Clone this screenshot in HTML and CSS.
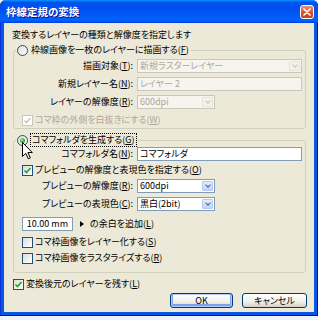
FILE: index.html
```html
<!DOCTYPE html>
<html lang="ja">
<head>
  <meta charset="UTF-8">
  <meta name="viewport" content="width=device-width, initial-scale=1.0">
  <title>枠線定規の変換</title>
  <link rel="stylesheet" href="styles.css">
</head>
<body>
  <div class="window">
    <div class="titlebar">
      <span class="title">枠線定規の変換</span>
      <span class="close-btn">
        <svg width="8" height="8" viewBox="0 0 8 8"><path d="M1 1 L7 7 M7 1 L1 7" stroke="#fff" stroke-width="1.7" stroke-linecap="round"/></svg>
      </span>
    </div>

    <div class="dialog">
      <p class="intro">変換するレイヤーの種類と解像度を指定します</p>

      <fieldset class="group group-first">
        <legend><span class="legend-row"><span class="radio"></span><span>枠線画像を一枚のレイヤーに描画する(<u>F</u>)</span></span></legend>
        <div class="form-grid disabled">
          <label>描画対象(<u>T</u>):</label>
          <div class="field wide"><span class="value">新規ラスターレイヤー</span><span class="drop"></span></div>
          <label>新規レイヤー名(<u>N</u>):</label>
          <div class="field wide"><span class="value">レイヤー 2</span></div>
          <label>レイヤーの解像度(<u>R</u>):</label>
          <div class="field small"><span class="value">600dpi</span><span class="drop"></span></div>
        </div>
        <div class="check-row disabled row-outside">
          <span class="check"><svg width="9" height="9" viewBox="0 0 9 9"><path d="M1.5 4.5 L3.5 6.5 L7.5 2" fill="none" stroke="#c9c7ba" stroke-width="1.6"/></svg></span>
          <span>コマ枠の外側を白抜きにする(<u>W</u>)</span>
        </div>
      </fieldset>

      <fieldset class="group group-second">
        <legend><span class="legend-row"><span class="radio on"></span><span class="focus">コマフォルダを生成する(<u>G</u>)</span></span></legend>
        <div class="form-grid row-name">
          <label>コマフォルダ名(<u>N</u>):</label>
          <div class="field wide"><span class="value">コマフォルダ</span></div>
        </div>
        <div class="check-row row-preview">
          <span class="check"><svg width="9" height="9" viewBox="0 0 9 9"><path d="M1.5 4.5 L3.5 6.5 L7.5 2" fill="none" stroke="#21a121" stroke-width="1.6"/></svg></span>
          <span>プレビューの解像度と表現色を指定する(<u>O</u>)</span>
        </div>
        <div class="form-grid row-selects">
          <label>プレビューの解像度(<u>R</u>):</label>
          <div class="field small"><span class="value">600dpi</span><span class="drop"></span></div>
          <label>プレビューの表現色(<u>C</u>):</label>
          <div class="field small"><span class="value">黒白(2bit)</span><span class="drop"></span></div>
        </div>
        <div class="margin-row">
          <div class="field unit"><span class="value">10.00 mm</span></div>
          <span class="arrow"></span>
          <span>の余白を追加(<u>L</u>)</span>
        </div>
        <div class="check-row row-layer">
          <span class="check"></span>
          <span>コマ枠画像をレイヤー化する(<u>S</u>)</span>
        </div>
        <div class="check-row row-raster">
          <span class="check"></span>
          <span>コマ枠画像をラスタライズする(<u>R</u>)</span>
        </div>
      </fieldset>

      <div class="check-row keep-row">
        <span class="check"><svg width="9" height="9" viewBox="0 0 9 9"><path d="M1.5 4.5 L3.5 6.5 L7.5 2" fill="none" stroke="#21a121" stroke-width="1.6"/></svg></span>
        <span>変換後元のレイヤーを残す(<u>L</u>)</span>
      </div>

      <div class="buttons">
        <button class="btn btn-default">OK</button>
        <button class="btn btn-cancel">キャンセル</button>
      </div>
    </div>

    <svg class="cursor" width="11" height="18" viewBox="0 0 11 18">
      <path d="M0.5 0.5 L0.5 14.5 L3.8 11.3 L6.3 16.8 L8.3 15.9 L5.9 10.5 L10.3 10.5 Z" fill="#fff" stroke="#000" stroke-width="1"/>
    </svg>
  </div>
</body>
</html>
```

FILE: styles.css
```css
body {
  margin: 0;
  width: 318px;
  height: 320px;
  overflow: hidden;
  background-color: #eef2fb;
  font-family: "Noto Sans CJK JP", sans-serif;
  font-size: 9px;
  line-height: 12px;
  font-feature-settings: "palt";
  color: #000;
}

.window {
  position: relative;
  width: 318px;
  height: 316px;
  box-sizing: border-box;
  background-color: #0856e4;
  border-radius: 6px 6px 0 0;
  box-shadow: inset -1px -1px #00138c, inset 1px 0 #0831d9;
  display: flex;
  flex-direction: column;
}

.titlebar {
  height: 23px;
  flex: none;
  border-radius: 6px 6px 0 0;
  background: linear-gradient(180deg, #0997ff, #0053ee 10%, #0050ee 40%, #0062fa 85%, #005bff 92%, #003dd7 100%);
  display: flex;
  align-items: center;
  justify-content: space-between;
  padding: 0 6px;
}

.title {
  color: #fff;
  font-weight: bold;
  font-size: 10.5px;
  text-shadow: 1px 1px #0f1089;
}

.close-btn {
  width: 14px;
  height: 14px;
  box-sizing: border-box;
  border: 1px solid #fff;
  border-radius: 3px;
  background: linear-gradient(180deg, #ec8d6e, #dc4d24 60%, #c8401b);
  display: flex;
  align-items: center;
  justify-content: center;
  margin-right: -2px;
}

.dialog {
  flex: 1;
  margin: 0 4px 4px;
  background-color: #ece9d8;
  padding: 6px 0 0;
  display: flex;
  flex-direction: column;
}

.intro {
  margin: 0 0 3px 8px;
  height: 12px;
}

u {
  text-decoration: underline;
  text-underline-offset: 1px;
}

/* group boxes */
.group {
  margin: 0 8px 0 9px;
  padding: 0;
  border: 1px solid #d0d0bf;
  border-radius: 3px;
  min-width: 0;
}

.group > div {
  margin-left: 8px;
}

.group legend {
  margin-left: 2px;
  padding: 0 2px 0 1px;
  height: 12px;
}

.legend-row {
  display: flex;
  align-items: center;
  gap: 3px;
  height: 12px;
}

.group-first {
  padding-top: 3px;
  padding-bottom: 2px;
}

.group-second {
  margin-top: 5px;
  padding-top: 1px;
  padding-bottom: 8px;
}

.focus {
  outline: 1px dotted #000;
  outline-offset: 0;
  padding: 0 1px;
}

.radio {
  width: 11px;
  height: 11px;
  box-sizing: border-box;
  border: 1px solid #1c5180;
  border-radius: 50%;
  background: linear-gradient(135deg, #dcdcd7, #fff);
  display: inline-flex;
  align-items: center;
  justify-content: center;
  flex: none;
}

.radio.on::after {
  content: "";
  width: 5px;
  height: 5px;
  border-radius: 50%;
  background: radial-gradient(circle at 35% 35%, #8ee88a, #21a121 70%);
}

.check {
  width: 11px;
  height: 11px;
  box-sizing: border-box;
  border: 1px solid #1c5180;
  background: linear-gradient(135deg, #dcdcd7, #fff);
  display: inline-flex;
  align-items: center;
  justify-content: center;
  flex: none;
}

.check-row {
  display: flex;
  align-items: center;
  gap: 2px;
  height: 12px;
}

.disabled {
  color: #aca899;
}

.check-row.disabled .check {
  border-color: #c9c7ba;
  background: #fff;
}

.row-outside { margin-top: 5px; }
.row-preview { margin-top: 3px; }
.row-layer { margin-top: 5px; }
.row-raster { margin-top: 4px; }

.keep-row {
  margin: 5px 0 0 9px;
}

/* label / field grid */
.form-grid {
  display: grid;
  grid-template-columns: 111px auto;
  grid-auto-rows: 14px;
  column-gap: 4px;
  row-gap: 4px;
  align-items: center;
}

.form-grid label {
  text-align: right;
  white-space: nowrap;
}

.form-grid.disabled label {
  color: #000;
}

.row-selects {
  margin-top: 3px;
}

.field {
  height: 14px;
  box-sizing: border-box;
  border: 1px solid #7f9db9;
  background-color: #fff;
  display: flex;
  align-items: center;
  justify-content: space-between;
  padding: 0 1px 0 2px;
}

.field.wide { width: 165px; }
.field.small { width: 78px; }

.form-grid.disabled .field {
  border-color: #c9c7ba;
  background-color: #f5f4ee;
  color: #aca899;
}

.value {
  white-space: nowrap;
  overflow: hidden;
}

.drop {
  width: 11px;
  height: 10px;
  box-sizing: border-box;
  border: 1px solid #b5c8f6;
  border-radius: 1px;
  background: linear-gradient(180deg, #e3ecfd, #c1d3fb);
  display: flex;
  align-items: center;
  justify-content: center;
}

.drop::after {
  content: "";
  width: 3px;
  height: 3px;
  border-right: 1.5px solid #4d6185;
  border-bottom: 1.5px solid #4d6185;
  transform: translateY(-1px) rotate(45deg);
}

.form-grid.disabled .drop {
  border-color: #e6e4d8;
  background: #f2f1ea;
}

.form-grid.disabled .drop::after {
  border-color: #c9c7ba;
}

.margin-row {
  display: flex;
  align-items: center;
  margin-top: 6px;
  height: 14px;
}

.field.unit {
  width: 51px;
  justify-content: flex-end;
  padding-right: 4px;
}

.arrow {
  width: 0;
  height: 0;
  border-top: 3px solid transparent;
  border-bottom: 3px solid transparent;
  border-left: 4px solid #000;
  margin: 0 6px 0 7px;
}

/* buttons */
.buttons {
  display: flex;
  justify-content: flex-end;
  gap: 9px;
  margin: 3px 7px 0 0;
}

.btn {
  height: 15px;
  box-sizing: border-box;
  border: 1px solid #003c74;
  border-radius: 3px;
  background: linear-gradient(180deg, #fff, #f0f0ea 60%, #d6d0c5);
  font-family: "Noto Sans CJK JP", sans-serif;
  font-size: 9px;
  line-height: 11px;
  font-feature-settings: "palt";
  color: #000;
  padding: 0;
}

.btn-default {
  width: 63px;
  box-shadow: inset 0 0 0 1px #b3cdf6, inset 0 -1px 0 2px #7fa0ea;
}

.btn-cancel {
  width: 65px;
}

.cursor {
  position: absolute;
  left: 22px;
  top: 142px;
}
```
